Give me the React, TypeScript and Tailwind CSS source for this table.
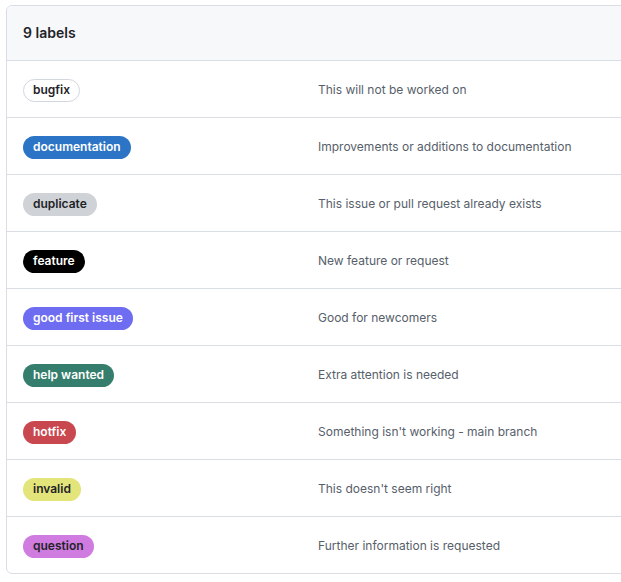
const labels = [
  { name: "bugfix", description: "This will not be worked on", pill: "bg-white text-[#1f2328] border border-[#d0d7de]" },
  { name: "documentation", description: "Improvements or additions to documentation", pill: "bg-[#2c74c5] text-white border border-transparent" },
  { name: "duplicate", description: "This issue or pull request already exists", pill: "bg-[#cfd3d7] text-[#1f2328] border border-transparent" },
  { name: "feature", description: "New feature or request", pill: "bg-black text-white border border-transparent" },
  { name: "good first issue", description: "Good for newcomers", pill: "bg-[#6e6cf0] text-white border border-transparent" },
  { name: "help wanted", description: "Extra attention is needed", pill: "bg-[#357e6d] text-white border border-transparent" },
  { name: "hotfix", description: "Something isn't working - main branch", pill: "bg-[#c9474f] text-white border border-transparent" },
  { name: "invalid", description: "This doesn't seem right", pill: "bg-[#e3e479] text-[#1f2328] border border-transparent" },
  { name: "question", description: "Further information is requested", pill: "bg-[#cf7bdf] text-[#1f2328] border border-transparent" },
]

export default function App() {
  return (
    <div className="h-[582px] w-[621px] overflow-hidden bg-white pl-[6px] pt-[5px] font-['Inter',sans-serif]">
      <div className="w-[680px] overflow-hidden rounded-md border border-[#d8dee4]">
        <div className="flex h-[54px] items-center bg-[#f6f8fa] pl-4 text-sm font-semibold text-[#1f2328]">
          {labels.length} labels
        </div>
        {labels.map((label) => (
          <div key={label.name} className="flex h-[57px] items-center border-t border-[#d8dee4] pl-4">
            <div className="w-[295px] shrink-0">
              <span
                className={`inline-flex h-[23px] items-center rounded-full px-[9px] text-xs font-semibold ${label.pill}`}
              >
                {label.name}
              </span>
            </div>
            <p className="pt-px text-xs text-[#57606a]">{label.description}</p>
          </div>
        ))}
      </div>
    </div>
  )
}
